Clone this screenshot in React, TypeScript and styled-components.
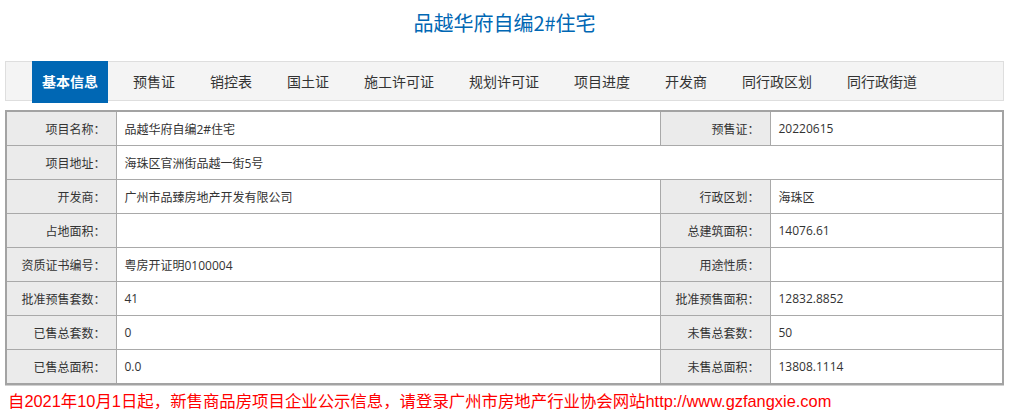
import styled, { createGlobalStyle } from "styled-components";

const GlobalStyle = createGlobalStyle`
  html, body {
    margin: 0;
    padding: 0;
    background: #fff;
  }
  body {
    font-family: "Open Sans", "Noto Sans CJK SC", sans-serif;
    color: #333;
  }
`;

const tabs = [
  "基本信息",
  "预售证",
  "销控表",
  "国土证",
  "施工许可证",
  "规划许可证",
  "项目进度",
  "开发商",
  "同行政区划",
  "同行政街道",
];

type Row = [string, string, string?, string?];

const rows: Row[] = [
  ["项目名称：", "品越华府自编2#住宅", "预售证：", "20220615"],
  ["项目地址：", "海珠区官洲街品越一街5号"],
  ["开发商：", "广州市品臻房地产开发有限公司", "行政区划：", "海珠区"],
  ["占地面积：", "", "总建筑面积：", "14076.61"],
  ["资质证书编号：", "粤房开证明0100004", "用途性质：", ""],
  ["批准预售套数：", "41", "批准预售面积：", "12832.8852"],
  ["已售总套数：", "0", "未售总套数：", "50"],
  ["已售总面积：", "0.0", "未售总面积：", "13808.1114"],
];

function App() {
  return (
    <Page>
      <GlobalStyle />
      <Title>品越华府自编2#住宅</Title>
      <TabBar>
        {tabs.map((t, i) => (
          <Tab key={t} $active={i === 0}>
            {t}
          </Tab>
        ))}
      </TabBar>
      <InfoTable>
        <colgroup>
          <col style={{ width: 110 }} />
          <col style={{ width: 544 }} />
          <col style={{ width: 110 }} />
          <col />
        </colgroup>
        <tbody>
          {rows.map((r) => (
            <tr key={r[0]}>
              <Label>{r[0]}</Label>
              {r[2] === undefined ? (
                <Value colSpan={3}>{r[1]}</Value>
              ) : (
                <>
                  <Value>{r[1]}</Value>
                  <Label>{r[2]}</Label>
                  <Value>{r[3]}</Value>
                </>
              )}
            </tr>
          ))}
        </tbody>
      </InfoTable>
      <Notice>
        自2021年10月1日起，新售商品房项目企业公示信息，请登录广州市房地产行业协会网站http://www.gzfangxie.com
      </Notice>
    </Page>
  );
}

export default App;

const Page = styled.div`
  width: 1010px;
  padding: 0 6px 0 5px;
  box-sizing: border-box;
`;

const Title = styled.h1`
  margin: 0;
  height: 45px;
  line-height: 45px;
  text-align: center;
  font-size: 20px;
  font-weight: normal;
  color: #0067b4;
  font-family: "Noto Sans CJK SC", sans-serif;
`;

const TabBar = styled.ul`
  list-style: none;
  margin: 16px 0 0;
  padding: 0 0 0 26px;
  height: 38px;
  display: flex;
  align-items: flex-start;
  gap: 15px;
  background: #f4f4f4;
  border: 1px solid #dedede;
`;

const Tab = styled.li<{ $active?: boolean }>`
  height: ${(p) => (p.$active ? "42px" : "38px")};
  line-height: 40px;
  padding: 0 10px;
  margin-top: -1px;
  font-size: 14px;
  font-family: "Noto Sans CJK SC", sans-serif;
  color: ${(p) => (p.$active ? "#fff" : "#333")};
  font-weight: ${(p) => (p.$active ? "bold" : "normal")};
  background: ${(p) => (p.$active ? "#0067b4" : "transparent")};
  white-space: nowrap;
`;

const InfoTable = styled.table`
  width: 999px;
  margin-top: 9px;
  border-collapse: collapse;
  table-layout: fixed;
  border: 2px solid #a3a3a3;
  box-shadow: 0 1px 0 #d0d0d0;
  font-size: 12px;
  font-family: "Open Sans", "Noto Sans CJK SC", sans-serif;
`;

const Label = styled.td`
  height: 33px;
  padding: 0 10px 0 0;
  text-align: right;
  background: #ebebeb;
  border: 1px solid #a9a9a9;
  color: #333;
`;

const Value = styled.td`
  height: 33px;
  padding: 0 0 0 8px;
  text-align: left;
  background: #fff;
  border: 1px solid #a9a9a9;
  color: #333;
`;

const Notice = styled.p`
  margin: 5px 0 0 3px;
  font-size: 16.4px;
  line-height: 22px;
  color: #ff0000;
  white-space: nowrap;
  font-family: "Liberation Sans", "Noto Sans CJK SC", sans-serif;
`;
